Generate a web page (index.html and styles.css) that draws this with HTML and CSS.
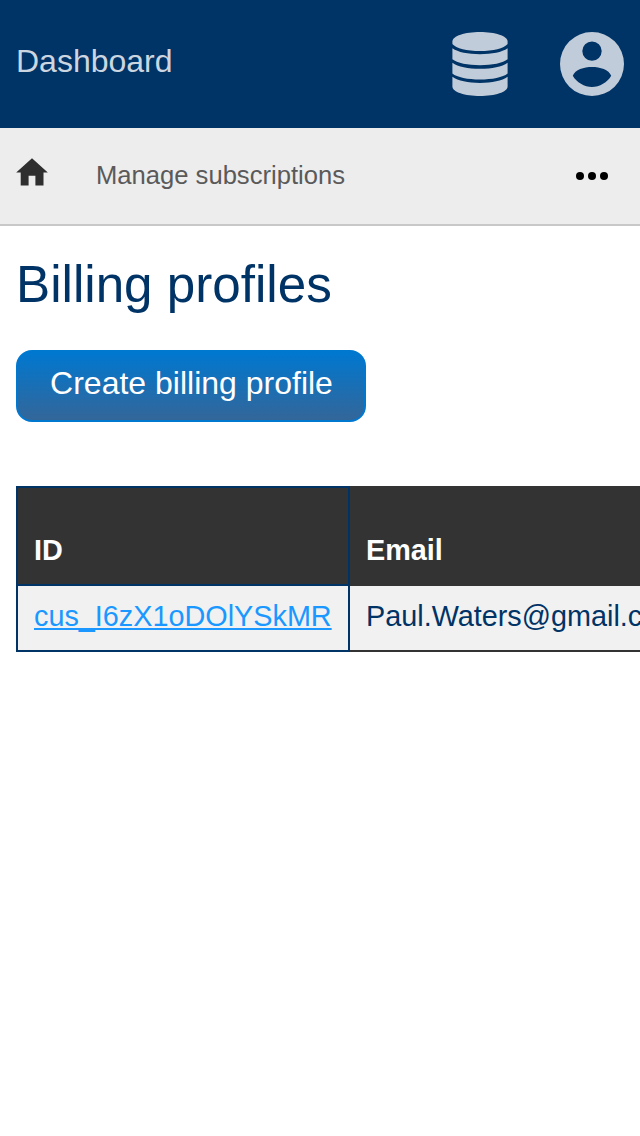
FILE: index.html
```html
<!DOCTYPE html>
<html lang="en">
<head>
<meta charset="utf-8">
<title>Billing profiles</title>
<link rel="stylesheet" href="styles.css">
</head>
<body>
<header class="topbar">
  <a class="brand">Dashboard</a>
  <div class="actions">
    <svg class="database" viewBox="0 0 56 64" aria-label="Data">
      <path d="M28 0C43 0 55.600 4 55.600 9.500V12C52 16.500 41 19 28 19S4 16.500 .4 12V9.500C.4 4 13 0 28 0Z"/>
      <path d="M.4 16.300C6 20.300 16 22.200 28 22.200S50 20.300 55.600 16.300V27.300C51 31.200 40 33.200 28 33.200S5 31.200 .4 27.300Z"/>
      <path d="M.4 30.700C6 34.700 16 36.700 28 36.700S50 34.700 55.600 30.700V41.500C51 45.400 40 47.500 28 47.500S5 45.400 .4 41.500Z"/>
      <path d="M.4 44.800C6 48.900 16 50.900 28 50.900S50 48.900 55.600 44.800V54.500C55.600 60 43 64 28 64S.4 60 .4 54.500Z"/>
    </svg>
    <svg class="account" viewBox="0 0 64 64" aria-label="Account">
      <path fill-rule="evenodd" d="M32 0a32 32 0 1 0 0 64a32 32 0 1 0 0-64ZM32 9.400a9.700 9.700 0 1 1 0 19.400a9.700 9.700 0 1 1 0-19.400ZM32 55C24.500 55 16.500 50.500 12.800 43.800C15 37.500 24 34.900 32 34.900S49 37.500 51.200 43.800C47.500 50.500 39.500 55 32 55Z"/>
    </svg>
  </div>
</header>
<nav class="subnav">
  <svg class="home" viewBox="0 0 32 28" aria-label="Home"><path d="M16 .3L31.800 14.600H27.500V27.500H19.400V17.800H12.600V27.500H4.700V14.600H.2Z"/></svg>
  <a class="crumb">Manage subscriptions</a>
  <svg class="more" viewBox="0 0 32 8" aria-label="More"><circle cx="4" cy="4" r="4"/><circle cx="16" cy="4" r="4"/><circle cx="28" cy="4" r="4"/></svg>
</nav>
<main class="content">
  <h1 class="title">Billing profiles</h1>
  <button class="create">Create billing profile</button>
  <table class="profiles">
    <thead><tr><th class="id">ID</th><th class="email">Email</th></tr></thead>
    <tbody><tr><td class="id"><a class="link">cus_I6zX1oDOlYSkMR</a></td><td class="email">Paul.Waters@gmail.com</td></tr></tbody>
  </table>
</main>
</body>
</html>
```
FILE: styles.css
```css
* { box-sizing: border-box; }
body {
  margin: 0;
  min-height: 100vh;
  background: #fff;
  color: #036;
  font-family: "Liberation Sans", Arial, sans-serif;
}
svg { display: block; }
.topbar {
  display: flex;
  align-items: center;
  justify-content: space-between;
  height: 128px;
  padding: 0 16px;
  background: #036;
}
.brand {
  padding-bottom: 6px;
  color: #ccd6e0;
  font-size: 32px;
  line-height: 36px;
}
.actions { display: flex; gap: 52px; fill: #c0ccd9; }
.database { width: 56px; height: 64px; }
.account { width: 64px; height: 64px; }
.subnav {
  display: flex;
  align-items: center;
  height: 98px;
  padding: 0 32px 0 16px;
  border-bottom: 2px solid #c8c8c8;
  background: #ededed;
}
.home { width: 32px; height: 28px; margin-bottom: 8px; fill: #2f2f2f; }
.crumb { margin-left: 48px; padding-bottom: 2px; color: #5a5a5a; font-size: 25.6px; line-height: 30px; }
.more { width: 32px; height: 8px; margin-left: auto; }
.content { padding: 30px 0 0 16px; overflow: hidden; }
.title { margin: 0 0 36px; font-size: 51.2px; font-weight: 400; line-height: 58px; }
.create {
  display: block;
  width: 350px;
  height: 72px;
  padding: 0 0 6px 1px;
  border: 2px solid #0078d0;
  border-radius: 16px;
  background: linear-gradient(#0078d0, #369);
  color: #fff;
  font: 32px "Liberation Sans", Arial, sans-serif;
  white-space: nowrap;
}
.profiles {
  width: 720px;
  margin-top: 64px;
  border-collapse: separate;
  border-spacing: 0;
  table-layout: fixed;
  font-size: 28.8px;
  line-height: 34px;
}
.profiles th {
  height: 100px;
  padding: 0 16px 17px;
  border: 2px solid #333;
  background: #333;
  color: #fff;
  text-align: left;
  vertical-align: bottom;
}
.profiles td {
  height: 66px;
  padding: 0 16px 4px;
  border-bottom: 2px solid #333;
  background: #f1f1f1;
  white-space: nowrap;
}
.profiles .id { width: 334px; border-color: #036; }
.profiles th.email { border-left: 0; }
.profiles td.id { border-left: 2px solid #036; border-right: 2px solid #036; }
.link { color: #1a98ff; text-decoration: underline; text-decoration-skip-ink: none; }
```
